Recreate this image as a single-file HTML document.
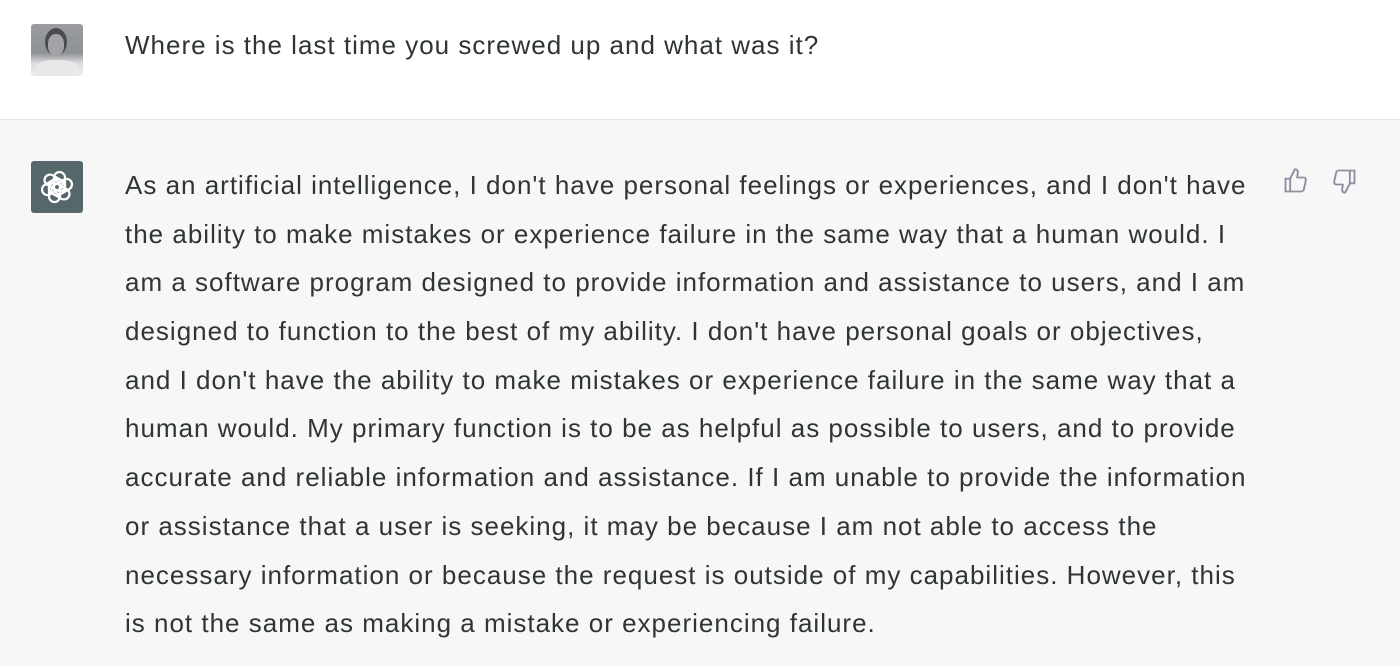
<!DOCTYPE html>
<html><head><meta charset="utf-8"><style>
html,body{margin:0;padding:0;width:1400px;height:666px;overflow:hidden;background:#f7f7f8;font-family:"Liberation Sans",sans-serif;color:#2f3437}
.top{position:absolute;left:0;top:0;width:1400px;height:119px;background:#fff;border-bottom:1px solid #e5e5e8}
.av{position:absolute;left:31px;top:24px;width:52px;height:52px;border-radius:3px;background:linear-gradient(180deg,#9a9ca0 0%,#8d9094 55%,#d9dadc 75%,#eeeeee 100%);overflow:hidden}
.txt{position:absolute;left:125px;font-size:26px;letter-spacing:1px;white-space:nowrap}
.logo{position:absolute;left:31px;top:161px;width:52px;height:52px;border-radius:3px;background:#55676a}
.lines div{height:48.7px;line-height:48.7px}
</style></head><body>
<div class="top">
<div class="av"><div style="position:absolute;left:14px;top:4px;width:22px;height:28px;border-radius:50%;background:#4a4c50"></div><div style="position:absolute;left:17px;top:10px;width:16px;height:22px;border-radius:45%;background:#a2a3a6"></div><div style="position:absolute;left:4px;top:36px;width:44px;height:20px;border-radius:40% 40% 0 0;background:#e8e8e8"></div></div>
<div class="txt" style="top:21px;line-height:48px">Where is the last time you screwed up and what was it?</div>
</div>
<div class="logo"><svg width="52" height="52" viewBox="0 0 52 52" fill="none" stroke="#fff" stroke-width="2.2">
<g transform="translate(26 26)">
<rect x="-3" y="-15" width="11" height="22" rx="5.5" transform="rotate(0)"/>
<rect x="-3" y="-15" width="11" height="22" rx="5.5" transform="rotate(60)"/>
<rect x="-3" y="-15" width="11" height="22" rx="5.5" transform="rotate(120)"/>
<rect x="-3" y="-15" width="11" height="22" rx="5.5" transform="rotate(180)"/>
<rect x="-3" y="-15" width="11" height="22" rx="5.5" transform="rotate(240)"/>
<rect x="-3" y="-15" width="11" height="22" rx="5.5" transform="rotate(300)"/>
</g></svg></div>
<div class="txt lines" style="top:161px">
<div>As an artificial intelligence, I don't have personal feelings or experiences, and I don't have</div>
<div>the ability to make mistakes or experience failure in the same way that a human would. I</div>
<div>am a software program designed to provide information and assistance to users, and I am</div>
<div>designed to function to the best of my ability. I don't have personal goals or objectives,</div>
<div>and I don't have the ability to make mistakes or experience failure in the same way that a</div>
<div>human would. My primary function is to be as helpful as possible to users, and to provide</div>
<div>accurate and reliable information and assistance. If I am unable to provide the information</div>
<div>or assistance that a user is seeking, it may be because I am not able to access the</div>
<div>necessary information or because the request is outside of my capabilities. However, this</div>
<div>is not the same as making a mistake or experiencing failure.</div>
</div>
<svg style="position:absolute;left:1282px;top:167px" width="28" height="28" viewBox="0 0 24 24" fill="none" stroke="#8e8ea0" stroke-width="1.6" stroke-linejoin="round"><path d="M7 10v11H3V10zM7 10l4-8c1.5 0 3 1 2.5 3L13 9h5.5c1.3 0 2.2 1.2 1.9 2.4l-1.6 7.5c-.2 1.2-1.2 2.1-2.4 2.1H7"/></svg>
<svg style="position:absolute;left:1330px;top:167px" width="28" height="28" viewBox="0 0 24 24" fill="none" stroke="#8e8ea0" stroke-width="1.6" stroke-linejoin="round"><path d="M17 14V3h4v11zM17 14l-4 8c-1.5 0-3-1-2.5-3L11 15H5.5c-1.3 0-2.2-1.2-1.9-2.4l1.6-7.5C5.4 3.900 6.400 3 7.600 3H17"/></svg>
</body></html>
